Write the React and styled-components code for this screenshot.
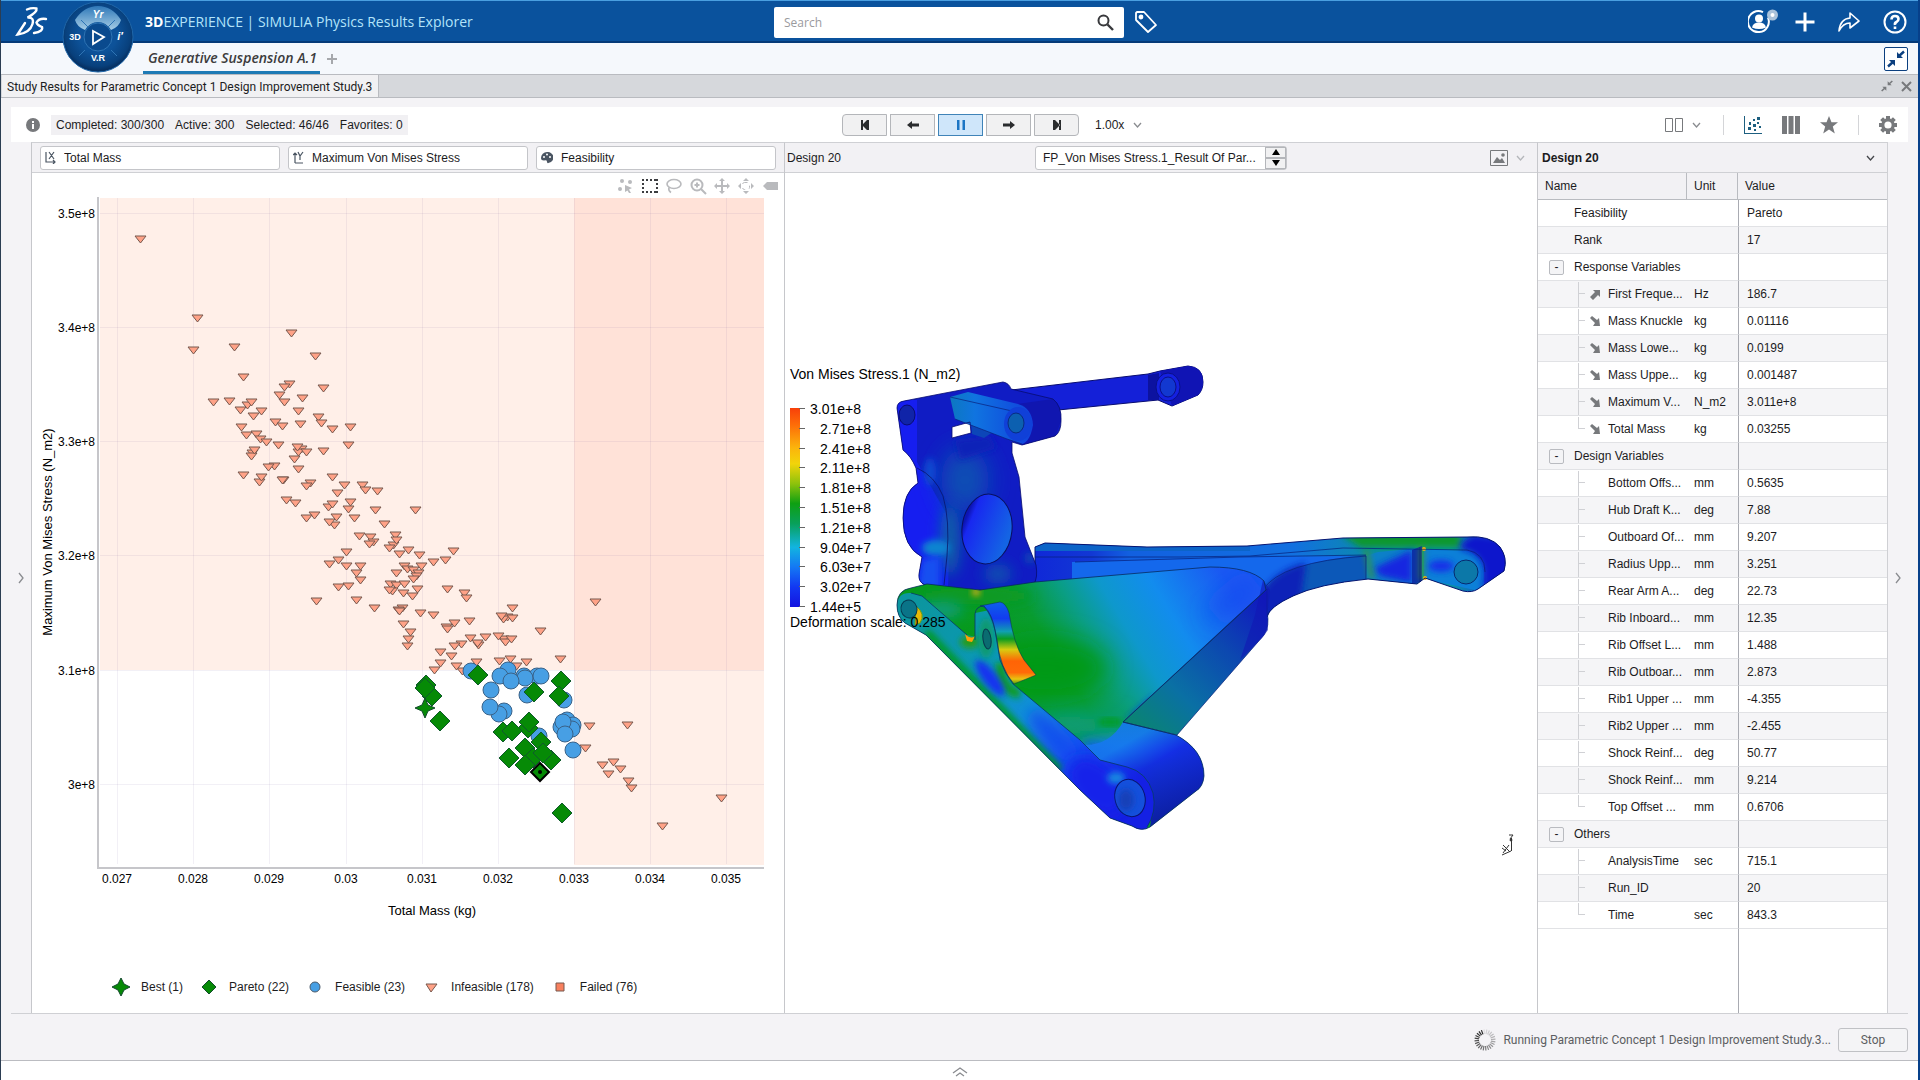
import React, { useState } from 'react'
import styled, { createGlobalStyle } from 'styled-components'

const uiFont = '"Liberation Sans", Arial, sans-serif'
const brandFont = '"Open Sans", "Noto Sans", sans-serif'
const labelFont = 'Roboto, "Open Sans", sans-serif'

const GlobalStyle = createGlobalStyle`
  * {
    box-sizing: border-box;
  }

  body {
    margin: 0;
    background: #f3f2f5;
    color: #1c1c1e;
    font-family: ${uiFont};
    font-size: 12px;
  }

  button,
  input,
  select {
    font-family: inherit;
    font-size: inherit;
    color: inherit;
    margin: 0;
  }

  svg {
    display: block;
    flex: none;
  }
`

const Page = styled.div`
  display: flex;
  flex-direction: column;
  min-height: 100vh;
  border-left: 1px solid #2b3d52;
  border-right: 2px solid #07408a;
`

const Header = styled.header`
  display: grid;
  grid-template-columns: 773fr 350px 794fr;
  align-items: center;
  height: 43px;
  padding-top: 2px;
  background: #0a529d;
  border-top: 1px solid #4a9fe0;
  border-bottom: 2px solid #053a78;
`

const Brand = styled.div`
  display: flex;
  align-items: flex-start;
  height: 38px;
  padding-left: 14px;
  gap: 13px;
`

const Logo = styled.svg`
  margin-top: 3px;
`

/* hangs out of the header over the tab strip */
const Compass = styled.svg`
  position: relative;
  z-index: 2;
  margin-top: -1px;
`

const Product = styled.h1`
  margin: 0 0 0 -2px;
  font: 400 14px/38px ${brandFont};
  color: #b3e4fa;
  white-space: nowrap;

  b {
    color: #fff;
  }
`

const SearchBox = styled.label`
  display: flex;
  align-items: center;
  height: 31px;
  padding: 0 10px;
  background: #fff;
  border-radius: 2px;

  input {
    flex: 1;
    min-width: 0;
    padding: 0;
    border: 0;
    outline: 0;
    font: 12px ${brandFont};
    background: none;
  }

  input::placeholder {
    color: #9a9a9e;
    opacity: 1;
  }
`

const HeaderActions = styled.div`
  display: flex;
  align-items: center;
  height: 38px;
  gap: 16px;
  padding: 0 11px 0 10px;
`

const IconButton = styled.button`
  display: flex;
  align-items: center;
  justify-content: center;
  border: 0;
  padding: 0 ${props => props.$pad || 0}px;
  background: none;
  color: ${props => props.$color || '#77797c'};
  cursor: pointer;
  margin-left: ${props => (props.$push ? 'auto' : '0')};
`

const DashboardTabs = styled.nav`
  display: flex;
  align-items: center;
  height: 31px;
  padding: 0 10px 0 142px;
  gap: 6px;
  background: #f5f8fc;
`

const DashboardTab = styled.a`
  height: 31px;
  padding: 0 3px 0 5px;
  border-bottom: 3px solid #1e7ab5;
  font: italic 600 14px/30px ${brandFont};
  color: #3c3c3c;
  text-decoration: none;
  white-space: nowrap;
`

const CollapseButton = styled(IconButton)`
  width: 24px;
  height: 24px;
  border: 1px solid #0b3f7f;
  border-radius: 2px;
  background: #fff;
`

const TitleBar = styled.div`
  display: flex;
  align-items: center;
  height: 24px;
  padding-right: 6px;
  gap: 8px;
  background: #d6d8dc;
  border-top: 1px solid #b9bbc0;
  border-bottom: 1px solid #b9bbc0;
`

const WindowTab = styled.h2`
  margin: 0 auto 0 1px;
  height: 22px;
  padding: 0 6px 0 5px;
  background: #f1f1f3;
  border-right: 1px solid #b9bbc0;
  font: 400 12px/24px ${labelFont};
  white-space: nowrap;
`

const Workspace = styled.main`
  flex: 1;
  display: flex;
  flex-direction: column;
  padding: 9px 10px 0;
  background: #f4f3f6;
`

const Toolbar = styled.div`
  display: grid;
  grid-template-columns: 1fr auto 1fr;
  align-items: center;
  height: 35px;
  padding-left: 2px;
  background: #fff;
`

const StudyStatus = styled.div`
  display: flex;
  align-items: center;
  gap: 11px;
  padding-left: 13px;
`

const Counts = styled.p`
  display: flex;
  gap: 11px;
  margin: 0;
  padding: 3px 5px;
  background: #f1f0f3;
`

const Playback = styled.div`
  display: flex;
  gap: 3px;
`

const PlayButton = styled.button`
  display: flex;
  align-items: center;
  justify-content: center;
  width: 45px;
  height: 22px;
  padding: 0;
  border: 1px solid ${props => (props.$on ? '#3f83b8' : '#b4b6ba')};
  background: ${props => (props.$on ? '#cfe6fa' : '#f1f1f2')};
  color: ${props => (props.$on ? '#1b75c4' : '#2a2c2e')};

  &:first-child {
    border-radius: 4px 0 0 4px;
  }

  &:last-child {
    border-radius: 0 4px 4px 0;
  }
`

const ViewActions = styled.div`
  display: flex;
  align-items: center;
  gap: 20px;
  padding: 0 11px 0 16px;
`

const SpeedPicker = styled.div`
  display: flex;
  align-items: center;
  gap: 7px;
  margin-right: auto;

  select {
    appearance: none;
    border: 0;
    padding: 0;
    width: 31px;
    background: none;
  }
`

const Split = styled.div`
  display: flex;
  align-items: center;
  justify-content: flex-end;
  gap: 8px;
  padding-right: ${props => (props.$inset ? '10px' : '2px')};
`

const Divider = styled.span`
  width: 1px;
  height: 20px;
  background: #d4d5d8;
`

const Body = styled.div`
  flex: 1;
  display: grid;
  grid-template-columns: 20px 1fr 1fr 351px 20px;
  border-bottom: 1px solid #cfd0d4;
`

const Rail = styled.div`
  display: flex;
  align-items: center;
  justify-content: center;
`

const Panel = styled.section`
  display: flex;
  flex-direction: column;
  min-width: 0;
  background: #fff;
  border-top: 1px solid #cfd0d4;
  border-left: 1px solid #c6c7cb;
  border-right: ${props => (props.$last ? '1px solid #cfd0d4' : '0')};
`

const PanelHeader = styled.div`
  display: flex;
  align-items: center;
  height: 30px;
  gap: 8px;
  padding: 0 8px;
  background: #f2f1f4;
  border-bottom: 1px solid #cfd0d4;
`

const ViewHeader = styled(PanelHeader)`
  display: grid;
  grid-template-columns: 1fr 252px 1fr;
  padding: 0 2px;
`

const PropertyHeader = styled(PanelHeader)`
  justify-content: space-between;
  padding: 0 12px 0 4px;

  h3 {
    margin: 0;
    font-size: 12px;
  }
`

const AxisPicker = styled.label`
  flex: 1;
  display: flex;
  align-items: center;
  height: 24px;
  padding: 0 4px;
  gap: 8px;
  border: 1px solid #c4c5c9;
  border-radius: 3px;
  background: #fff;

  select {
    flex: 1;
    min-width: 0;
    appearance: none;
    border: 0;
    padding: 0;
    background: none;
  }
`

const ResultPicker = styled.div`
  display: flex;
  height: 24px;
  border: 1px solid #c4c5c9;
  border-radius: 3px;
  background: #fff;

  select {
    flex: 1;
    min-width: 0;
    appearance: none;
    border: 0;
    padding: 0 7px;
    background: none;
  }
`

const Stepper = styled.div`
  display: grid;
  width: 21px;

  button {
    display: flex;
    align-items: center;
    justify-content: center;
    padding: 0;
    border: 1px solid #b4b6ba;
    background: #f1f1f2;
  }
`

const ChartTools = styled.div`
  display: flex;
  align-items: center;
  justify-content: flex-end;
  height: 24px;
  gap: 6px;
  padding: 2px 5px 0;
`

const Plot = styled.svg`
  width: 100%;
  height: auto;
  font-size: 12px;
`

const AxisTitle = styled.text`
  font-size: 13px;
`

const Legend = styled.ul`
  display: flex;
  gap: 17px;
  margin: 45px 0 0;
  padding: 0 0 0 80px;
  list-style: none;

  li {
    display: flex;
    align-items: center;
    gap: 11px;
  }
`

const Viewport = styled.svg`
  width: 100%;
  height: 0;
  flex: 1 1 auto;
  font-size: 14px;
`

const Table = styled.table`
  width: 100%;
  table-layout: fixed;
  border-collapse: separate;
  border-spacing: 0;

  th {
    height: 27px;
    padding: 0 7px;
    text-align: left;
    font-weight: 400;
    background: #f2f1f4;
    border-bottom: 1px solid #b9bbc0;
    border-right: 1px solid #b9bbc0;
  }

  th:nth-child(1) {
    width: 149px;
  }

  th:nth-child(2) {
    width: 51px;
  }

  th:last-child {
    border-right: 0;
  }

  td {
    height: 27px;
    padding: 0 7px;
    border-bottom: 1px solid #e1e2e5;
    white-space: nowrap;
  }

  td:last-child {
    border-left: 1px solid #a9abb2;
    padding-left: 8px;
  }

  tr:nth-child(even) td {
    background: #f5f5f7;
  }
`

const NameCell = styled.div`
  display: flex;
  align-items: center;
  height: 26px;
  margin-right: -7px;
  padding-left: ${props => (props.$leaf ? '33px' : '29px')};
`

const Fold = styled.button`
  width: 15px;
  height: 15px;
  margin: 0 10px 0 -25px;
  padding: 0;
  border: 1px solid #b9bbc0;
  border-radius: 2px;
  background: #f4f4f6;
  line-height: 12px;
`

const Branch = styled.span`
  align-self: flex-start;
  flex: none;
  width: 8px;
  height: 26px;
  background:
    linear-gradient(#d0d1d5, #d0d1d5) 0 1px / 1px ${props => (props.$end ? '12px' : '25px')} no-repeat,
    linear-gradient(#d0d1d5, #d0d1d5) 0 12px / 7px 1px no-repeat;
`

const Goal = styled.span`
  width: 22px;
  padding-left: 3px;
`

/* keeps the value column line running to the bottom of the panel */
const TableRest = styled.div`
  flex: 1;
  margin-left: 200px;
  border-left: 1px solid #a9abb2;
`

const StatusBar = styled.footer`
  display: flex;
  align-items: center;
  justify-content: flex-end;
  height: 46px;
  gap: 7px;
  padding-top: 5px;
  color: #5c5e62;
  font: 12px ${labelFont};

  button {
    width: 70px;
    height: 24px;
    border: 1px solid #c0c1c5;
    border-radius: 3px;
    background: #f4f4f6;
  }
`

const BottomDrawer = styled.div`
  display: flex;
  align-items: flex-end;
  justify-content: center;
  height: 20px;
  padding-bottom: 3px;
  background: #fff;
  border-top: 1px solid #bbbcc1;
`

const Chevron = ({ d, w = 9, h = 6, color = '#8a8c90' }) => (
  <svg width={w} height={h} viewBox={`0 0 ${w} ${h}`} fill="none" stroke={color} strokeWidth="1.3">
    <path d={d} />
  </svg>
)

const DownChevron = ({ color }) => <Chevron d="M1 1l3.500 4l3.500-4" color={color} />

const InwardArrows = ({ size, color }) => (
  <svg width={size} height={size} viewBox="0 0 18 18" fill={color} stroke={color}>
    <path d="M10 8V2l6 6z M8 10v6L2 10z" stroke="none" />
    <path d="M12 6l5-4.500M6 12l-5 4.500" strokeWidth="2.400" />
  </svg>
)

// ---- scatter plot ----

const infeasible = [
  [140, 239], [197, 318], [193, 350], [234, 347], [291, 333], [315, 356], [243, 377], [289, 384],
  [284, 387], [323, 388], [279, 395], [284, 402], [302, 398], [213, 402], [229, 401], [247, 405],
  [251, 402], [240, 410], [261, 411], [253, 416], [298, 411], [318, 417], [321, 423], [275, 422],
  [282, 426], [300, 424], [332, 429], [350, 427], [241, 427], [246, 435], [256, 434], [260, 439],
  [266, 442], [278, 445], [301, 449], [298, 452], [297, 447], [306, 452], [323, 451], [348, 445],
  [252, 453], [251, 456], [254, 450], [294, 459], [274, 466], [268, 467], [298, 469], [243, 475],
  [259, 482], [261, 477], [283, 480], [282, 480], [332, 477], [310, 483], [306, 486], [344, 485],
  [362, 485], [365, 490], [377, 491], [337, 493], [286, 500], [295, 503], [328, 507], [332, 504],
  [350, 502], [348, 509], [375, 510], [415, 510], [314, 515], [306, 518], [336, 517], [354, 518],
  [334, 525], [329, 522], [384, 524], [359, 536], [370, 537], [373, 542], [369, 544], [395, 535],
  [393, 545], [396, 540], [389, 548], [408, 550], [399, 554], [419, 555], [346, 552], [338, 560],
  [329, 564], [346, 566], [360, 566], [356, 573], [396, 573], [404, 566], [407, 569], [413, 570],
  [421, 566], [433, 562], [418, 573], [416, 576], [413, 579], [360, 580], [338, 587], [348, 586],
  [390, 584], [396, 585], [404, 584], [392, 591], [389, 590], [417, 589], [403, 593], [412, 596],
  [316, 601], [356, 600], [374, 608], [402, 608], [398, 610], [399, 611], [453, 551], [445, 560],
  [447, 589], [464, 593], [466, 598], [512, 608], [595, 602], [420, 613], [433, 615], [403, 624],
  [410, 632], [408, 639], [407, 646], [454, 623], [446, 627], [447, 629], [469, 621], [507, 617],
  [503, 619], [501, 616], [512, 618], [540, 631], [470, 638], [461, 644], [454, 646], [478, 645],
  [477, 643], [485, 637], [503, 639], [505, 642], [498, 636], [511, 639], [440, 652], [451, 656],
  [440, 663], [434, 670], [462, 671], [456, 666], [476, 662], [499, 661], [510, 659], [516, 666],
  [526, 662], [560, 659], [589, 726], [627, 725], [585, 748], [602, 765], [613, 762], [620, 769],
  [608, 774], [628, 781], [631, 788], [721, 798], [662, 826],
]

const feasible = [
  [471, 671], [508, 670], [500, 676], [524, 676], [537, 676], [525, 678], [541, 676], [511, 681],
  [491, 690], [527, 695], [564, 700], [504, 711], [499, 714], [490, 707], [539, 736], [567, 720],
  [561, 727], [573, 725], [572, 729], [563, 722], [565, 734], [573, 750],
]

const pareto = [
  [426, 685], [432, 696], [425, 688], [440, 721], [478, 675], [534, 692], [561, 681], [559, 696],
  [503, 732], [528, 728], [512, 731], [529, 722], [541, 742], [525, 748], [509, 758], [533, 758],
  [551, 760], [543, 753], [525, 765], [562, 813],
]

const xTicks = [
  [117, '0.027'], [193, '0.028'], [269, '0.029'], [346, '0.03'], [422, '0.031'],
  [498, '0.032'], [574, '0.033'], [650, '0.034'], [726, '0.035'],
]

const yTicks = [
  [213, '3.5e+8'], [327, '3.4e+8'], [441, '3.3e+8'], [555, '3.2e+8'], [670, '3.1e+8'], [784, '3e+8'],
]

const Star = ({ x, y }) => (
  <path
    d={`M${x} ${y - 10}L${x + 3} ${y - 3}L${x + 10} ${y}L${x + 3} ${y + 3}L${x} ${y + 10}L${x - 3} ${y + 3}L${x - 10} ${y}L${x - 3} ${y - 3}z`}
    fill="#068a06"
    stroke="#124a2c"
  />
)

const ScatterPlot = () => (
  <Plot viewBox="32 197 752 736" role="img" aria-label="Total Mass against Maximum Von Mises Stress">
    <rect x="100" y="198" width="664" height="472" fill="#ffefe8" />
    <rect x="574" y="670" width="190" height="195" fill="#ffefe8" />
    <rect x="574" y="198" width="190" height="472" fill="#ffe2d8" />
    <g stroke="#55408a" strokeOpacity="0.08" shapeRendering="crispEdges">
      {xTicks.map(([x]) => (
        <path key={x} d={`M${x}.5 198V864`} />
      ))}
      {yTicks.map(([y]) => (
        <path key={y} d={`M100 ${y}.5H764`} />
      ))}
    </g>
    <path d="M98 197V868H764" fill="none" stroke="#c6c6ca" strokeWidth="2" />
    <g textAnchor="middle">
      {xTicks.map(([x, label]) => (
        <text key={label} x={x} y="883">{label}</text>
      ))}
      <AxisTitle x="432" y="915">Total Mass (kg)</AxisTitle>
      <AxisTitle transform="translate(52 532) rotate(-90)">Maximum Von Mises Stress (N_m2)</AxisTitle>
    </g>
    <g textAnchor="end">
      {yTicks.map(([y, label]) => (
        <text key={label} x="95" y={y + 5}>{label}</text>
      ))}
    </g>
    <g fill="#ffa287" stroke="#77584e">
      {infeasible.map(([x, y], i) => (
        <path key={i} d={`M${x - 5} ${y - 3}h11l-5.500 7z`} />
      ))}
    </g>
    <g fill="#479fe4" stroke="#3a6288">
      {feasible.map(([x, y], i) => (
        <circle key={i} cx={x} cy={y} r="8" />
      ))}
    </g>
    <g fill="#068a06" stroke="#0f5a2c">
      {pareto.map(([x, y], i) => (
        <path key={i} d={`M${x} ${y - 10}l10 10l-10 10l-10-10z`} />
      ))}
    </g>
    <Star x={425} y={708} />
    <path d="M540 763l9 9l-9 9l-9-9z" fill="#068a06" stroke="#000" strokeWidth="2" />
    <circle cx="540" cy="772" r="2" />
  </Plot>
)

const LegendMark = ({ children }) => (
  <svg width="18" height="18" viewBox="-9 -9 18 18">{children}</svg>
)

// ---- stress result ----

const scaleLabels = [
  '3.01e+8', '2.71e+8', '2.41e+8', '2.11e+8', '1.81e+8', '1.51e+8',
  '1.21e+8', '9.04e+7', '6.03e+7', '3.02e+7', '1.44e+5',
]

const stressStops = [
  [0, '#f8400a'], [8, '#fd6a08'], [20, '#fbb40c'], [28, '#f2d40a'], [38, '#8ec20c'], [48, '#0ea012'],
  [58, '#08a05a'], [70, '#12b4e0'], [80, '#1478f4'], [90, '#1238f2'], [100, '#1414e0'],
]

const plate = 'M897 605Q897 590 911 588L927 584L980 590L1035 582L1210 567Q1250 567 1264 581L1266 590L1123 722L1176 735Q1204 750 1204 776Q1203 787 1196 791L1150 827Q1142 832 1132 826L1110 818L1080 790L926 635L905 623Q897 617 897 605z'
const flange = 'M897 605Q898 592 911 593L922 596L967 635L975 637V613L990 610L996 635L1013 684L1080 740L1100 760L1127 767Q1147 772 1153 793Q1157 810 1147 828Q1140 832 1132 826L1110 818L1080 790L926 635L905 623Q897 617 897 605z'
const knuckle = 'M897 408Q897 402 904 401L940 394L1003 382Q1009 383 1011 389L1053 399Q1062 406 1061 421Q1061 432 1055 436L1022 445L1012 442V453L1019 477L1025 537L1036 565Q1038 578 1034 583Q1005 590 980 590L925 585Q918 582 919 574L922 557Q903 547 903 518Q903 492 918 483L916 468Q911 456 903 450zM952 427V438L971 433L970 422z'
const rearArm = 'M1035 547L1045 543L1147 547L1247 546L1343 538L1467 537Q1490 535 1500 547Q1508 558 1504 571L1478 589Q1472 593 1463 591L1425 578L1417 584L1368 579Q1318 584 1293 596Q1269 607 1267 617L1263 596L1240 571L1150 576L1035 583z'

const StressView = () => (
  <Viewport viewBox="785 173 752 840" role="img" aria-label="Von Mises stress on the suspension">
    <defs>
      <linearGradient id="scale" x1="0" y1="0" x2="0" y2="1">
        {stressStops.map(([o, c]) => (
          <stop key={o} offset={`${o}%`} stopColor={c} />
        ))}
      </linearGradient>
      <linearGradient id="plateFill" gradientUnits="userSpaceOnUse" x1="1000" y1="690" x2="1215" y2="560">
        <stop offset="0" stopColor="#069a1c" />
        <stop offset="0.26" stopColor="#089c30" />
        <stop offset="0.42" stopColor="#0a9e84" />
        <stop offset="0.56" stopColor="#0e98cc" />
        <stop offset="0.74" stopColor="#128cee" />
        <stop offset="1" stopColor="#1a58f2" />
      </linearGradient>
      <linearGradient id="bandFill" gradientUnits="userSpaceOnUse" x1="1265" y1="600" x2="1140" y2="730">
        <stop offset="0" stopColor="#1018c0" />
        <stop offset="0.35" stopColor="#0c48b0" />
        <stop offset="0.7" stopColor="#0a70a4" />
        <stop offset="1" stopColor="#0a8472" />
      </linearGradient>
      <linearGradient id="flangeFill" gradientUnits="userSpaceOnUse" x1="915" y1="610" x2="1120" y2="800">
        <stop offset="0" stopColor="#0c96a0" />
        <stop offset="0.3" stopColor="#0a98b4" />
        <stop offset="0.55" stopColor="#1090d8" />
        <stop offset="0.75" stopColor="#1450f0" />
        <stop offset="1" stopColor="#1420e4" />
      </linearGradient>
      <linearGradient id="lugFill" x1="0" y1="0" x2="0" y2="1">
        <stop offset="0" stopColor="#0e60e8" />
        <stop offset="0.2" stopColor="#123cf0" />
        <stop offset="0.36" stopColor="#10a0b0" />
        <stop offset="0.45" stopColor="#0a9c20" />
        <stop offset="0.58" stopColor="#d8cc10" />
        <stop offset="0.72" stopColor="#ff6406" />
        <stop offset="0.86" stopColor="#ff6a08" />
        <stop offset="0.94" stopColor="#e8c410" />
        <stop offset="1" stopColor="#48a010" />
      </linearGradient>
      <linearGradient id="bossFill" gradientUnits="userSpaceOnUse" x1="1140" y1="735" x2="1185" y2="812">
        <stop offset="0" stopColor="#1678ee" />
        <stop offset="0.35" stopColor="#1424e8" />
        <stop offset="1" stopColor="#0c10a8" />
      </linearGradient>
      <linearGradient id="rearFill" x1="0" y1="0" x2="1" y2="0">
        <stop offset="0" stopColor="#1028d8" />
        <stop offset="0.12" stopColor="#1238d4" />
        <stop offset="0.2" stopColor="#1260e0" />
        <stop offset="0.55" stopColor="#1270e0" />
        <stop offset="0.75" stopColor="#0a90a0" />
        <stop offset="0.88" stopColor="#0c98a0" />
        <stop offset="1" stopColor="#1430e0" />
      </linearGradient>
      <linearGradient id="armFill" x1="0" y1="0" x2="1" y2="0">
        <stop offset="0" stopColor="#0c78c0" />
        <stop offset="0.3" stopColor="#1074e0" />
        <stop offset="1" stopColor="#1040dc" />
      </linearGradient>
      <linearGradient id="holeFill" x1="0" y1="0" x2="1" y2="0.4">
        <stop offset="0.18" stopColor="#0c14b4" />
        <stop offset="0.28" stopColor="#1828f0" />
        <stop offset="1" stopColor="#1464e4" />
      </linearGradient>
      <filter id="broad" x="-100%" y="-100%" width="300%" height="300%">
        <feGaussianBlur stdDeviation="12" />
      </filter>
      <filter id="soft" x="-100%" y="-100%" width="300%" height="300%">
        <feGaussianBlur stdDeviation="7" />
      </filter>
      <filter id="softer" x="-50%" y="-50%" width="200%" height="200%">
        <feGaussianBlur stdDeviation="3" />
      </filter>
      <clipPath id="plateClip"><path d={plate} /></clipPath>
      <clipPath id="flangeClip"><path d={flange} /></clipPath>
      <clipPath id="knuckleClip"><path d={knuckle} clipRule="evenodd" /></clipPath>
      <clipPath id="rearClip"><path d={rearArm} /></clipPath>
    </defs>

    {/* rear arm */}
    <path d={rearArm} fill="url(#rearFill)" />
    <g clipPath="url(#rearClip)">
      <path d="M1340 534H1460V547H1360z" fill="#08982c" filter="url(#softer)" />
      <path d="M1035 543H1250V551H1035z" fill="#0c64c8" />
      <path d="M1072 562L1240 557L1368 556L1290 570L1265 583L1240 571L1072 580z" fill="#1468ec" />
      <path d="M1263 592Q1280 562 1366 555L1368 580L1290 600L1267 620z" fill="#0c58b8" />
      <path d="M1258 600Q1272 570 1306 563L1300 604L1267 622z" fill="#1020b8" filter="url(#softer)" />
      <path d="M1366 556L1378 552L1421 548V580L1411 584L1366 579z" fill="#0c80c8" />
      <path d="M1374 568L1412 550V583L1380 576z" fill="#1228e0" filter="url(#softer)" />
      <path d="M1412 550L1422 546V581L1412 585z" fill="#0c30a8" />
      <path d="M1424 549L1470 551L1484 562V592L1424 579z" fill="#0c80d8" />
      <ellipse cx="1441" cy="566" rx="13" ry="6" fill="#1430e8" filter="url(#softer)" />
      <path d="M1474 535L1510 540V580L1482 589Q1490 560 1468 551Q1450 548 1474 535z" fill="#1016cc" filter="url(#softer)" />
      <path d="M1366 550L1372 579M1422 546V580" stroke="#4a9c10" strokeWidth="3" filter="url(#softer)" />
    </g>
    <ellipse cx="1466" cy="572" rx="12" ry="12" fill="#0c78a8" stroke="#062a70" />
    <circle cx="1424" cy="549" r="2" fill="#f0b010" />
    <circle cx="1425" cy="578" r="2" fill="#f0b010" />
    <path d="M1035 557H1180L1250 556L1343 548L1467 550Q1485 553 1485 572M1075 562L1240 557L1366 555M1263 590Q1280 562 1366 556V579M1420 547V582" fill="none" stroke="#06207a" strokeOpacity="0.7" />
    <path d={rearArm} fill="none" stroke="#061470" />

    {/* upper link */}
    <path d="M1003 391L1148 374L1160 371L1188 366Q1203 367 1203 382Q1203 390 1198 395L1172 406L1158 400L1058 410L1020 420z" fill="#1420d8" stroke="#080c70" />
    <path d="M1148 375L1159 373V400L1148 400z" fill="#0c12a0" />
    <path d="M1160 371L1188 366Q1203 367 1203 382Q1203 390 1198 395L1172 406z" fill="#1014b4" />
    <ellipse cx="1168" cy="387" rx="12" ry="14" fill="#1420e0" stroke="#0a1088" />
    <ellipse cx="1168" cy="387" rx="8" ry="10" fill="#1238d0" stroke="#0a1088" />

    {/* knuckle */}
    <path d={knuckle} fill="#101cc4" fillRule="evenodd" />
    <g clipPath="url(#knuckleClip)">
      <path d="M897 400H917V462L950 520L948 590H900z" fill="#161ef0" />
      <ellipse cx="965" cy="480" rx="24" ry="32" fill="#0c50b4" filter="url(#broad)" />
      <ellipse cx="950" cy="540" rx="10" ry="36" fill="#0c5ea8" filter="url(#soft)" />
      <ellipse cx="998" cy="574" rx="14" ry="10" fill="#0c50b0" filter="url(#soft)" />
      <ellipse cx="1030" cy="558" rx="6" ry="6" fill="#1040b8" filter="url(#softer)" />
      <ellipse cx="936" cy="548" rx="14" ry="8" fill="#0c84d0" filter="url(#softer)" />
      <path d="M922 560L940 556V588H918z" fill="#1450f0" filter="url(#softer)" />
      <ellipse cx="930" cy="472" rx="6" ry="14" fill="#1048d0" filter="url(#softer)" />
      <path d="M955 440L990 436L996 448L960 460z" fill="#1024b8" filter="url(#softer)" />
      <path d="M971 422L996 430L984 438L972 434z" fill="#0c46b8" />
      <path d="M1017 404L1053 399Q1062 406 1061 421L1055 437L1022 446z" fill="#1016b0" />
    </g>
    <path d="M950 397L968 392L1018 404Q1032 408 1033 425Q1030 442 1022 444L1007 439L955 419z" fill="url(#armFill)" />
    <path d="M950 397L1012 411M955 419L1007 439L1022 444" fill="none" stroke="#08207c" strokeOpacity="0.7" />
    <ellipse cx="1018" cy="424" rx="14" ry="17" fill="#1040d8" />
    <ellipse cx="1016" cy="423" rx="8" ry="10" fill="#0c60b0" stroke="#082c80" />
    <ellipse cx="907" cy="415" rx="8" ry="10" fill="#1024a8" stroke="#080c70" />
    <path d="M917 468Q935 476 943 496Q950 520 947 556L944 585" fill="none" stroke="#081060" strokeOpacity="0.7" />
    <ellipse cx="987" cy="529" rx="25" ry="35" fill="url(#holeFill)" stroke="#081060" transform="rotate(6 987 529)" />
    <path d={knuckle} fill="none" stroke="#080c70" strokeOpacity="0.8" />

    {/* lower arm */}
    <path d={plate} fill="url(#plateFill)" />
    <g clipPath="url(#plateClip)">
      <ellipse cx="975" cy="596" rx="60" ry="8" fill="#0a9a20" filter="url(#soft)" />
      <ellipse cx="940" cy="610" rx="24" ry="8" fill="#0c9c84" filter="url(#soft)" />
      <ellipse cx="1045" cy="668" rx="62" ry="30" fill="#069a18" filter="url(#broad)" />
      <ellipse cx="1070" cy="725" rx="50" ry="10" fill="#0a9ca0" filter="url(#broad)" />
      <ellipse cx="1235" cy="598" rx="34" ry="10" fill="#164cf0" filter="url(#broad)" transform="rotate(-40 1235 598)" />
      <ellipse cx="1128" cy="748" rx="52" ry="12" fill="#1488ec" filter="url(#soft)" />
      <ellipse cx="1110" cy="722" rx="12" ry="3" fill="#089c10" filter="url(#softer)" />
      <path d="M1124 720L1156 694L1150 708z" fill="#1430e0" filter="url(#softer)" />
      <path d="M1082 742L1123 756L1150 780L1110 790z" fill="#1430e8" filter="url(#soft)" />
      <circle cx="976" cy="592" r="4" fill="#e0b010" filter="url(#softer)" />
    </g>
    <path d="M1123 722L1176 735Q1204 750 1204 776Q1203 787 1196 791L1150 827L1154 800Q1150 772 1127 767L1100 760L1085 745Q1110 745 1123 722z" fill="url(#bossFill)" fillOpacity="0.9" />
    <path d="M1267 589L1267 612Q1270 626 1264 635L1177 735L1123 722L1235 618z" fill="url(#bandFill)" stroke="#06207a" strokeOpacity="0.7" />
    <path d="M1263 580L1270 590L1267 617L1268 630L1262 638L1240 660L1255 615z" fill="#1018b4" fillOpacity="0.6" />

    <path d={flange} fill="url(#flangeFill)" />
    <g clipPath="url(#flangeClip)">
      <path d="M926 632L1060 770" stroke="#069a20" strokeWidth="8" filter="url(#softer)" />
      <path d="M1000 663Q1000 690 1020 694" stroke="#0a9c28" strokeWidth="10" fill="none" filter="url(#softer)" />
      <ellipse cx="990" cy="678" rx="22" ry="7" fill="#1430f0" filter="url(#softer)" transform="rotate(52 990 678)" />
      <ellipse cx="1052" cy="735" rx="34" ry="7" fill="#1448f0" filter="url(#soft)" transform="rotate(47 1052 735)" />
      <ellipse cx="1096" cy="786" rx="34" ry="22" fill="#1420ea" filter="url(#soft)" transform="rotate(45 1096 786)" />
      <ellipse cx="1116" cy="778" rx="9" ry="6" fill="#1488e0" filter="url(#softer)" />
      <ellipse cx="970" cy="642" rx="10" ry="6" fill="#2a9c10" filter="url(#softer)" />
      <path d="M916 606Q926 614 920 623L915 625z" fill="#e8b808" stroke="#6aa010" />
      <ellipse cx="986" cy="638" rx="8" ry="20" fill="#089a70" filter="url(#softer)" />
    </g>
    <path d="M965 634Q971 640 975 636L972 642L967 641z" fill="#ffa008" />
    <path d="M988 612Q984 605 980 606L1000 602Q1006 603 1009 613Q1014 645 1024 660L1036 675L1014 684Q1000 668 997 640Q994 622 988 612z" fill="url(#lugFill)" stroke="#0a3050" strokeOpacity="0.5" />
    <path d="M975 640V614Q976 606 984 606Q992 614 995 630L1000 660Q1005 674 1013 684L1080 740L1100 760L1127 767Q1147 772 1153 793Q1157 812 1147 827M911 593L922 596L967 635" fill="none" stroke="#083868" strokeOpacity="0.8" />
    <ellipse cx="987" cy="639" rx="4" ry="10" fill="#0a6c70" stroke="#083850" transform="rotate(-8 987 639)" />
    <ellipse cx="909" cy="609" rx="8" ry="9" fill="#0a7488" stroke="#063850" transform="rotate(-15 909 609)" />
    <ellipse cx="1130" cy="798" rx="15" ry="19" fill="#1450dc" stroke="#081470" transform="rotate(-15 1130 798)" />
    <ellipse cx="1126" cy="800" rx="8" ry="11" fill="#1240b8" filter="url(#softer)" />
    <path d={plate} fill="none" stroke="#062a60" strokeOpacity="0.8" />

    {/* colour scale */}
    <text x="790" y="379">Von Mises Stress.1 (N_m2)</text>
    <rect x="790" y="408" width="10" height="199" fill="url(#scale)" />
    {scaleLabels.map((label, i) => (
      <g key={label}>
        <path d={`M799 ${408 + Math.round(i * 19.8)}.5h6`} stroke="#666" />
        <text x={i % 10 ? 820 : 810} y={414 + Math.round(i * 19.8)}>{label}</text>
      </g>
    ))}
    <text x="790" y="627">Deformation scale: 0.285</text>

    {/* view axes */}
    <g fill="none" stroke="#333">
      <path d="M1511.500 838V851M1511 851l-9 4M1509 835h4l-3 4M1503 845l7 7M1509 845l-6 8M1502 848l4 3" />
      <circle cx="1511" cy="840" r="1" fill="#333" />
    </g>
  </Viewport>
)

// ---- property table ----

const properties = [
  { name: 'Feasibility', value: 'Pareto' },
  { name: 'Rank', value: '17' },
  { name: 'Response Variables', group: true },
  { name: 'First Freque...', unit: 'Hz', value: '186.7', goal: 'up' },
  { name: 'Mass Knuckle', unit: 'kg', value: '0.01116', goal: 'down' },
  { name: 'Mass Lowe...', unit: 'kg', value: '0.0199', goal: 'down' },
  { name: 'Mass Uppe...', unit: 'kg', value: '0.001487', goal: 'down' },
  { name: 'Maximum V...', unit: 'N_m2', value: '3.011e+8', goal: 'down' },
  { name: 'Total Mass', unit: 'kg', value: '0.03255', goal: 'down', end: true },
  { name: 'Design Variables', group: true },
  { name: 'Bottom Offs...', unit: 'mm', value: '0.5635', leaf: true },
  { name: 'Hub Draft K...', unit: 'deg', value: '7.88', leaf: true },
  { name: 'Outboard Of...', unit: 'mm', value: '9.207', leaf: true },
  { name: 'Radius Upp...', unit: 'mm', value: '3.251', leaf: true },
  { name: 'Rear Arm A...', unit: 'deg', value: '22.73', leaf: true },
  { name: 'Rib Inboard...', unit: 'mm', value: '12.35', leaf: true },
  { name: 'Rib Offset L...', unit: 'mm', value: '1.488', leaf: true },
  { name: 'Rib Outboar...', unit: 'mm', value: '2.873', leaf: true },
  { name: 'Rib1 Upper ...', unit: 'mm', value: '-4.355', leaf: true },
  { name: 'Rib2 Upper ...', unit: 'mm', value: '-2.455', leaf: true },
  { name: 'Shock Reinf...', unit: 'deg', value: '50.77', leaf: true },
  { name: 'Shock Reinf...', unit: 'mm', value: '9.214', leaf: true },
  { name: 'Top Offset ...', unit: 'mm', value: '0.6706', leaf: true, end: true },
  { name: 'Others', group: true },
  { name: 'AnalysisTime', unit: 'sec', value: '715.1', leaf: true },
  { name: 'Run_ID', value: '20', leaf: true },
  { name: 'Time', unit: 'sec', value: '843.3', leaf: true, end: true },
]

const GoalArrow = ({ goal }) => (
  <svg width="12" height="12" viewBox="0 0 12 12" fill="#77797c">
    {goal === 'up' && <path d="M1 9l5-5L4 2h7v7L9 7l-5 5z" />}
    {goal === 'down' && <path d="M1 3l2-2l5 4l2-2l1 8H4l2-3z" />}
  </svg>
)

const PropertyTable = () => (
  <Table>
    <thead>
      <tr>
        <th>Name</th>
        <th>Unit</th>
        <th>Value</th>
      </tr>
    </thead>
    <tbody>
      {properties.map((p, i) => {
        const leaf = p.leaf || p.goal
        return (
          <tr key={i}>
            <td>
              <NameCell $leaf={leaf}>
                {p.group && <Fold aria-label={`Collapse ${p.name}`}>-</Fold>}
                {leaf && <Branch $end={p.end} />}
                {leaf && <Goal>{p.goal && <GoalArrow goal={p.goal} />}</Goal>}
                {p.name}
              </NameCell>
            </td>
            <td>{p.unit}</td>
            <td>{p.value}</td>
          </tr>
        )
      })}
    </tbody>
  </Table>
)

// ---- header and toolbar ----

const TopHeader = () => (
  <Header>
    <Brand>
      <Logo width="34" height="32" viewBox="0 0 34 32" fill="none" stroke="#fff" strokeWidth="2.400" strokeLinecap="round">
        <path d="M12 3.500Q17 1.500 21.500 2.500Q22.500 6 12.500 11.500Q19.500 11 17.500 18Q15 27 2.500 28.500L10 17" />
        <path d="M31 13Q24 12 21.500 16.500Q22 19 27 21Q28.500 25.500 19 27" />
      </Logo>
      <Compass width="72" height="72" viewBox="0 0 72 72">
        <defs>
          <radialGradient id="dial" cx="0.5" cy="0.45" r="0.55">
            <stop offset="0.5" stopColor="#0d5299" />
            <stop offset="0.85" stopColor="#08407c" />
            <stop offset="1" stopColor="#052a58" />
          </radialGradient>
          <linearGradient id="north" x1="0" y1="0" x2="0" y2="1">
            <stop offset="0" stopColor="#2f78b8" />
            <stop offset="1" stopColor="#a6cde6" />
          </linearGradient>
        </defs>
        <circle cx="36" cy="35" r="35" fill="url(#dial)" stroke="#1f66a8" />
        <path d="M13 18Q22 4 36 4Q50 4 59 18Q57 25 49 28Q44 20 36 20Q28 20 23 28Q15 25 13 18z" fill="url(#north)" />
        <circle cx="36" cy="35" r="14" fill="#0a4a8e" stroke="#2e74b4" />
        <path d="M31 29v13l11-7z" fill="none" stroke="#fff" strokeWidth="1.800" />
        <path d="M23 48l-6 6M49 48l6 6M26 25l-7-7M46 25l7-7" stroke="#2e74b4" />
        <g fill="#fff" fontFamily={uiFont} fontWeight="700" textAnchor="middle">
          <text x="13" y="38" fontSize="9">3D</text>
          <text x="58" y="38" fontSize="11" fontStyle="italic">i′</text>
          <text x="36" y="59" fontSize="9">V.R</text>
          <text x="36" y="16" fontSize="10" fontStyle="italic">Yr</text>
        </g>
      </Compass>
      <Product><b>3D</b>EXPERIENCE | SIMULIA Physics Results Explorer</Product>
    </Brand>
    <SearchBox>
      <input type="search" placeholder="Search" aria-label="Search" />
      <svg width="17" height="17" viewBox="0 0 17 17" fill="none" stroke="#38393c" strokeWidth="2">
        <circle cx="6.500" cy="6.500" r="5" />
        <path d="M10.500 10.500L16 16" strokeWidth="2.400" />
      </svg>
    </SearchBox>
    <HeaderActions>
      <IconButton $color="#fff" aria-label="6WTags">
        <svg width="24" height="24" viewBox="0 0 24 24" fill="none" stroke="currentColor" strokeWidth="1.800" strokeLinejoin="round">
          <path d="M2 3l1-1h7l12 13l-8 7L2 10z" />
          <circle cx="7" cy="7" r="1.500" fill="currentColor" />
        </svg>
      </IconButton>
      <IconButton $color="#fff" $push aria-label="Profile">
        <svg width="31" height="28" viewBox="1 0 31 28">
          <path d="M21 9.500A10.500 10.500 0 1 1 16 4.200" fill="none" stroke="currentColor" strokeWidth="2" />
          <circle cx="12" cy="10.500" r="4" fill="currentColor" />
          <path d="M5 19.500q1-5 7-5t7 5q-7 3-14 0z" fill="currentColor" />
          <circle cx="25.500" cy="7" r="5.500" fill="#aac2da" />
          <circle cx="25.500" cy="7" r="2" fill="#fff" />
        </svg>
      </IconButton>
      <IconButton $color="#fff" aria-label="Add">
        <svg width="20" height="20" viewBox="0 0 20 20" stroke="currentColor" strokeWidth="3">
          <path d="M10 0.500V19.500M0.500 10H19.500" />
        </svg>
      </IconButton>
      <IconButton $color="#fff" $pad={7} aria-label="Share">
        <svg width="22" height="22" viewBox="0 0 22 22" fill="none" stroke="currentColor" strokeWidth="1.600" strokeLinejoin="round">
          <path d="M1 20Q2 8 12 7V2l9 8l-9 7v-5Q5 12 1 20z" />
        </svg>
      </IconButton>
      <IconButton $color="#fff" aria-label="Help">
        <svg width="24" height="24" viewBox="0 0 24 24" fill="none" stroke="currentColor" strokeWidth="2">
          <circle cx="12" cy="12" r="10.500" />
          <path d="M8.500 9.500q0-3.500 3.500-3.500t3.500 3q0 2-2 3t-1.500 3M12 16.500v2.500" strokeWidth="2.600" />
        </svg>
      </IconButton>
    </HeaderActions>
  </Header>
)

const PlaybackControls = ({ playing, onToggle }) => (
  <Playback>
    <PlayButton aria-label="First">
      <svg width="10" height="12" viewBox="0 0 10 12" fill="currentColor">
        <path d="M1 1h2v10H1z M2 6l5-5h2v10H7z" />
      </svg>
    </PlayButton>
    <PlayButton aria-label="Previous">
      <svg width="12" height="10" viewBox="0 0 12 10" fill="currentColor">
        <path d="M0 5l5-4v2.500h7v3H5V9z" />
      </svg>
    </PlayButton>
    <PlayButton $on={playing} onClick={onToggle} aria-label="Pause">
      <svg width="8" height="12" viewBox="0 0 8 12" fill="currentColor">
        <path d="M0 1h2.500v10H0z M5.500 1H8v10H5.500z" />
      </svg>
    </PlayButton>
    <PlayButton aria-label="Next">
      <svg width="12" height="10" viewBox="0 0 12 10" fill="currentColor">
        <path d="M12 5L7 1v2.500H0v3h7V9z" />
      </svg>
    </PlayButton>
    <PlayButton aria-label="Last">
      <svg width="10" height="12" viewBox="0 0 10 12" fill="currentColor">
        <path d="M7 1h2v10H7z M8 6L3 1H1v10h2z" />
      </svg>
    </PlayButton>
  </Playback>
)

const StudyToolbar = () => {
  const [playing, setPlaying] = useState(true)

  return (
    <Toolbar>
      <StudyStatus>
        <svg width="14" height="14" viewBox="0 0 14 14">
          <circle cx="7" cy="7" r="7" fill="#77797c" />
          <path d="M7 6v5M7 3v2" stroke="#fff" strokeWidth="2" />
        </svg>
        <Counts>
          <span>Completed: 300/300</span>
          <span>Active: 300</span>
          <span>Selected: 46/46</span>
          <span>Favorites: 0</span>
        </Counts>
      </StudyStatus>
      <PlaybackControls playing={playing} onToggle={() => setPlaying(!playing)} />
      <ViewActions>
        <SpeedPicker>
          <select aria-label="Speed"><option>1.00x</option></select>
          <DownChevron />
        </SpeedPicker>
        <Split>
          <IconButton aria-label="Layout">
            <svg width="20" height="16" viewBox="0 0 20 16" fill="none" stroke="currentColor">
              <path d="M1.500 1.500h7v13h-7zM11.500 1.500h7v13h-7z" />
            </svg>
          </IconButton>
          <DownChevron />
        </Split>
        <Divider />
        <IconButton $color="#1d5f80" aria-label="Scatter">
          <svg width="18" height="20" viewBox="0 0 18 20" fill="currentColor">
            <path d="M0 1h1v17h17v1H0z" />
            <path d="M4 12h3v3H4zM5 7h2v3H5zM9 9h3v3H9zM9 4h2v2H9zM13 2h3v3h-3zM13 7h2v2h-2zM15 11h2v2h-2zM10 14h2v2h-2z" />
          </svg>
        </IconButton>
        <IconButton aria-label="Columns">
          <svg width="18" height="20" viewBox="0 0 18 20" fill="currentColor">
            <path d="M0 1h5v18H0zM6.500 1h5v18h-5zM13 1h5v18h-5z" />
          </svg>
        </IconButton>
        <IconButton aria-label="Favorites">
          <svg width="18" height="18" viewBox="0 0 18 18" fill="currentColor">
            <path d="M9 0l2.500 6.200h6.500l-5.200 4.200l2 7.100L9 13.500l-5.800 4l2-7.100L0 6.200h6.500z" />
          </svg>
        </IconButton>
        <Divider />
        <IconButton aria-label="Settings">
          <svg width="18" height="18" viewBox="-9 -9 18 18">
            <circle r="5.200" fill="none" stroke="currentColor" strokeWidth="3.200" />
            {[0, 45, 90, 135].map(a => (
              <path key={a} d="M0-9v3M0 6v3" stroke="currentColor" strokeWidth="4" transform={`rotate(${a})`} />
            ))}
          </svg>
        </IconButton>
      </ViewActions>
    </Toolbar>
  )
}

const AxisIcon = ({ d }) => (
  <svg width="11" height="13" viewBox="0 0 11 13" fill="none" stroke="#4a5562" strokeWidth="1.200">
    <path d={d} />
  </svg>
)

const ChartPanel = () => (
  <Panel>
    <PanelHeader>
      <AxisPicker>
        <AxisIcon d="M1 1v10h9M8 9l2 2l-2 2M4 1l5 7M9 1L4 8" />
        <select aria-label="X axis"><option>Total Mass</option></select>
      </AxisPicker>
      <AxisPicker>
        <AxisIcon d="M2 12V2M0 4l2-2l2 2M2 12h8M5 1l2 4l3-4M7 5v4" />
        <select aria-label="Y axis"><option>Maximum Von Mises Stress</option></select>
      </AxisPicker>
      <AxisPicker>
        <svg width="12" height="12" viewBox="0 0 12 12">
          <path d="M6 0a6 5.500 0 0 1 2 10.800q-2 1-2-1q0-2-3-1.300Q0 8.500 0 6A6 6 0 0 1 6 0z" fill="#4a5562" />
          <g fill="#fff"><circle cx="3" cy="5" r="1" /><circle cx="6" cy="2.500" r="1" /><circle cx="9" cy="5" r="1" /></g>
        </svg>
        <select aria-label="Colour"><option>Feasibility</option></select>
      </AxisPicker>
    </PanelHeader>
    <ChartTools>
      <IconButton $color="#b9babd" aria-label="Pick points">
        <svg width="18" height="18" viewBox="0 0 18 18" fill="currentColor">
          <circle cx="5" cy="4" r="2" /><circle cx="13" cy="5" r="2" /><circle cx="3" cy="12" r="2" />
          <path d="M8 8l7 3l-3 1.500l2 3.500h-2l-1.500-2.500L8 15z" />
        </svg>
      </IconButton>
      <IconButton $color="#3c3d40" aria-label="Box select">
        <svg width="18" height="18" viewBox="0 0 18 18" fill="none" stroke="currentColor" strokeWidth="2" strokeDasharray="2 2">
          <path d="M1 3h16M1 15h16M2 2v14M16 2v14" />
        </svg>
      </IconButton>
      <IconButton $color="#b9babd" aria-label="Lasso">
        <svg width="18" height="18" viewBox="0 0 18 18" fill="none" stroke="currentColor" strokeWidth="1.600">
          <ellipse cx="9" cy="7" rx="7" ry="4.500" /><path d="M4 10.500q-1 3 2 5" />
        </svg>
      </IconButton>
      <IconButton $color="#b9babd" aria-label="Zoom">
        <svg width="18" height="18" viewBox="0 0 18 18" fill="none" stroke="currentColor" strokeWidth="2">
          <circle cx="8" cy="8" r="5.500" /><path d="M12 12l5 5M5.500 8h5M8 5.500v5" />
        </svg>
      </IconButton>
      <IconButton $color="#b9babd" aria-label="Pan">
        <svg width="18" height="18" viewBox="0 0 18 18" fill="currentColor">
          <path d="M8 4H6l3-3l3 3h-2v4h4V6l3 3l-3 3v-2h-4v4h2l-3 3l-3-3h2v-4H4v2L1 9l3-3v2h4z" />
        </svg>
      </IconButton>
      <IconButton $color="#b9babd" aria-label="Fit">
        <svg width="18" height="18" viewBox="0 0 18 18" fill="currentColor">
          <path d="M9 1l3 3H6zM9 17l3-3H6zM1 9l3-3v6zM17 9l-3-3v6z" />
          <rect x="5.500" y="5.500" width="7" height="7" rx="2" fill="none" stroke="currentColor" strokeDasharray="3 4" />
        </svg>
      </IconButton>
      <IconButton $color="#b9babd" aria-label="Tag">
        <svg width="18" height="18" viewBox="0 0 18 18" fill="currentColor">
          <path d="M2 9l4-4h11v8H6z" />
        </svg>
      </IconButton>
    </ChartTools>
    <ScatterPlot />
    <Legend>
      <li><LegendMark><path d="M0-9L3-3L9 0L3 3L0 9L-3 3L-9 0L-3-3z" fill="#068a06" stroke="#124a2c" /></LegendMark>Best (1)</li>
      <li><LegendMark><path d="M0-7L7 0L0 7L-7 0z" fill="#068a06" stroke="#124a2c" /></LegendMark>Pareto (22)</li>
      <li><LegendMark><circle r="5" fill="#479fe4" stroke="#4a5a6a" /></LegendMark>Feasible (23)</li>
      <li><LegendMark><path d="M-5-3H6L0 5z" fill="#ffa287" stroke="#77584e" /></LegendMark>Infeasible (178)</li>
      <li><LegendMark><path d="M-4-4h8v8h-8z" fill="#f8805e" stroke="#77584e" /></LegendMark>Failed (76)</li>
    </Legend>
  </Panel>
)

const ViewerPanel = () => (
  <Panel>
    <ViewHeader>
      <span>Design 20</span>
      <ResultPicker>
        <select aria-label="Result"><option>FP_Von Mises Stress.1_Result Of Par...</option></select>
        <Stepper>
          <button aria-label="Previous result">
            <svg width="8" height="6" viewBox="0 0 8 6"><path d="M0 6l4-6l4 6z" /></svg>
          </button>
          <button aria-label="Next result">
            <svg width="8" height="6" viewBox="0 0 8 6"><path d="M0 0h8L4 6z" /></svg>
          </button>
        </Stepper>
      </ResultPicker>
      <Split $inset>
        <svg width="18" height="16" viewBox="0 0 18 16" fill="#77797c">
          <path d="M0.500 0.500h17v15h-17z" fill="none" stroke="#77797c" />
          <path d="M3 13l4-6l3 3l2-2l3 5z" /><circle cx="13" cy="5" r="1.800" />
        </svg>
        <DownChevron color="#b4b6ba" />
      </Split>
    </ViewHeader>
    <StressView />
  </Panel>
)

const App = () => (
  <>
    <GlobalStyle />
    <Page>
      <TopHeader />
      <DashboardTabs>
        <DashboardTab href="#">Generative Suspension A.1</DashboardTab>
        <IconButton aria-label="Add tab">
          <svg width="12" height="12" viewBox="0 0 12 12" stroke="#a6a8ac" strokeWidth="2"><path d="M6 1v10M1 6h10" /></svg>
        </IconButton>
        <CollapseButton $push aria-label="Exit full screen"><InwardArrows size={18} color="#0b3f7f" /></CollapseButton>
      </DashboardTabs>
      <TitleBar>
        <WindowTab>Study Results for Parametric Concept 1 Design Improvement Study.3</WindowTab>
        <IconButton aria-label="Restore"><InwardArrows size={12} color="#77797c" /></IconButton>
        <IconButton aria-label="Close">
          <svg width="11" height="11" viewBox="0 0 11 11" stroke="currentColor" strokeWidth="2"><path d="M1 1l9 9M10 1l-9 9" /></svg>
        </IconButton>
      </TitleBar>
      <Workspace>
        <StudyToolbar />
        <Body>
          <Rail><Chevron w={7} h={12} d="M1 1l4 5l-4 5" /></Rail>
          <ChartPanel />
          <ViewerPanel />
          <Panel $last>
            <PropertyHeader>
              <h3>Design 20</h3>
              <DownChevron color="#44464a" />
            </PropertyHeader>
            <PropertyTable />
            <TableRest />
          </Panel>
          <Rail><Chevron w={7} h={12} d="M1 1l4 5l-4 5" /></Rail>
        </Body>
        <StatusBar>
          <svg width="22" height="22" viewBox="-11 -11 22 22" stroke="#222" strokeWidth="1.200">
            {Array.from({ length: 24 }, (_, i) => (
              <path key={i} d="M0-10.500v4.500" transform={`rotate(${-20 - i * 15})`} strokeOpacity={1 - i / 26} />
            ))}
          </svg>
          <span>Running Parametric Concept 1 Design Improvement Study.3...</span>
          <button>Stop</button>
        </StatusBar>
      </Workspace>
      <BottomDrawer>
        <Chevron w={16} h={10} d="M1 6l7-5l7 5M4 9l4-3l4 3" />
      </BottomDrawer>
    </Page>
  </>
)

export default App
